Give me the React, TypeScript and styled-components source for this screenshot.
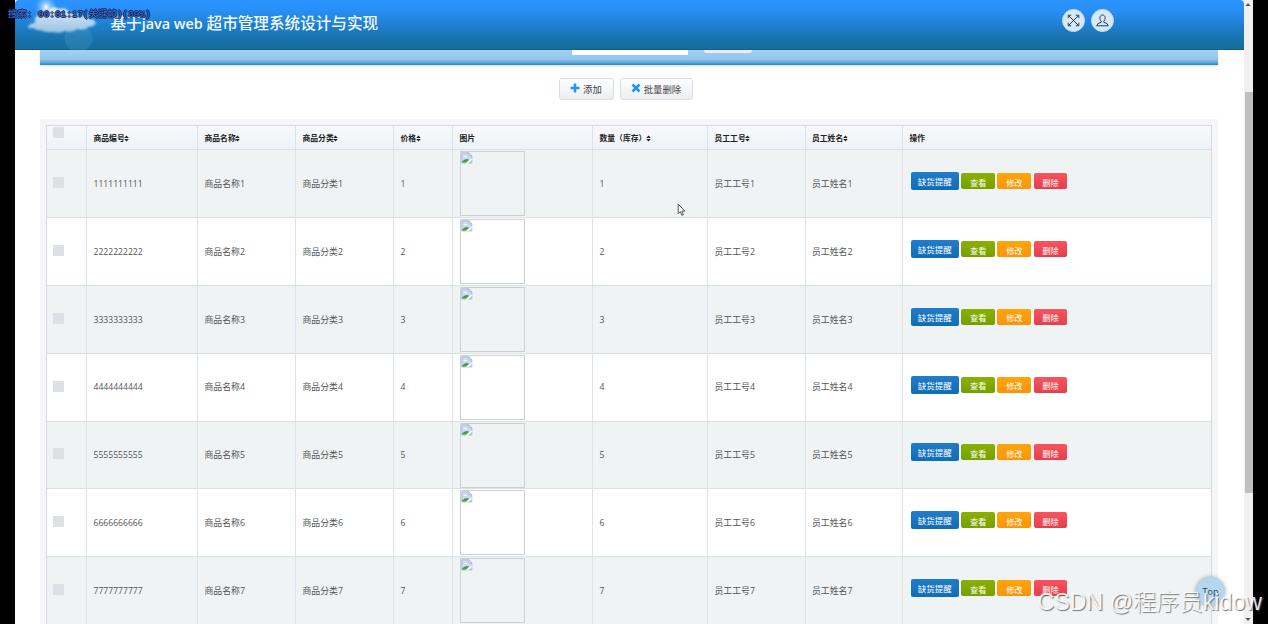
import React from "react";
import styled, { createGlobalStyle } from "styled-components";

const GlobalStyle = createGlobalStyle`
  * { box-sizing: border-box; }
  body { margin: 0; background: #000; overflow: hidden; font-family: "Open Sans", "Noto Sans CJK SC", sans-serif; }
`;

const Screen = styled.div`
  position: relative;
  display: flex;
  width: 1268px;
  height: 624px;
  padding: 0 15px 0 14.5px;
  overflow: hidden;
  background: #000;
`;

const Page = styled.div`
  flex: 1;
  min-width: 0;
  background: #fff;
`;

const Header = styled.header`
  display: flex;
  align-items: flex-start;
  height: 50px;
  border-radius: 4px 4px 0 0;
  border-bottom: 1px solid #11608f;
  background: linear-gradient(#2a94ff 0%, #2990f8 18%, #1f80d2 50%, #1873ad 78%, #156c9c 100%);
`;

const Logo = styled.svg`
  width: 96px;
  height: 50px;
  flex: none;
`;

const Title = styled.h1`
  margin: 12px auto 0 0;
  font-size: 15.6px;
  line-height: 22px;
  font-weight: 500;
  color: #f4faff;
  white-space: pre;
  b { font-size: 14.4px; font-weight: 600; }
`;

const HeaderActions = styled.div`
  display: flex;
  gap: 6px;
  padding: 8.5px 129.5px 0 0;
`;

const RoundButton = styled.button`
  display: grid;
  place-items: center;
  width: 23px;
  height: 23px;
  padding: 0;
  border: 1px solid #bedcf6;
  border-radius: 50%;
  background: #d6e8f9;
  svg { display: block; }
`;

const SearchBand = styled.div`
  display: flex;
  justify-content: center;
  gap: 16px;
  height: 15.4px;
  margin: 0 26px 0 25.5px;
  padding-left: 67px;
  background: linear-gradient(#a5d0ef 0%, #93c6ec 60%, #66b0e2 80%, #3c98c9 92%, #2d88b2 100%);
  box-shadow: 0 1px 2px rgba(0, 0, 0, 0.15);
`;

const SearchInput = styled.div`
  width: 116px;
  height: 5px;
  background: #fff;
`;

const SearchButton = styled.div`
  width: 48px;
  height: 3px;
  border-radius: 0 0 3px 3px;
  background: #e9ecf6;
`;

const Toolbar = styled.div`
  display: flex;
  justify-content: center;
  gap: 6px;
  padding: 12.6px 7px 0 0;
  height: 53.8px;
`;

const ToolButton = styled.button<{ $width: number }>`
  display: flex;
  align-items: center;
  justify-content: center;
  gap: 3px;
  width: ${(p) => p.$width}px;
  height: 22px;
  padding: 1px 0 0;
  border: 1px solid #d9dcec;
  border-radius: 3px;
  background: linear-gradient(#fff, #ebedf0);
  color: #444;
  font: 9.4px "Noto Sans CJK SC", sans-serif;
  svg { margin-top: -2px; }
`;

const Panel = styled.main`
  margin: 0 26px 0 25.5px;
  padding: 6px 6px 0 6px;
  background: #f6f5f7;
`;

const Grid = styled.div`
  border: 1px solid #d3dae0;
  background: #fff;
`;

const Row = styled.div<{ $striped?: boolean }>`
  display: grid;
  grid-template-columns: 40px 111px 98px 98px 59px 140px 115px 97.5px 97.5px 1fr;
  height: 67.8px;
  border-bottom: 1px solid #d9e1e7;
  background: ${(p) => (p.$striped ? "#eff3f4" : "#fff")};
`;

const HeadRow = styled(Row)`
  height: 24.2px;
  background: linear-gradient(#f7f8fb, #eef3f8);
`;

const Cell = styled.div`
  display: flex;
  align-items: center;
  min-width: 0;
  padding: 0.5px 0 0 6.5px;
  border-right: 1px solid #dde3e8;
  color: #555;
  font-size: 8.9px;
  line-height: 12px;
  white-space: nowrap;
  &:last-child { border-right: 0; }
`;

const NumberCell = styled(Cell)`
  font-size: 8.6px;
`;

const HeadCell = styled(Cell)`
  color: #222;
  font-size: 7.8px;
  font-weight: 700;
  padding-top: 1px;
  svg { margin-left: -0.5px; }
`;

const CheckCell = styled(Cell)<{ $top?: boolean }>`
  align-items: ${(p) => (p.$top ? "flex-start" : "center")};
  padding: ${(p) => (p.$top ? "1px 0 0 6px" : "0 0 2px 6px")};
`;

const CheckBox = styled.span`
  width: 11px;
  height: 11px;
  background: #dde1e6;
`;

const ImageCell = styled(Cell)`
  align-items: flex-start;
  padding-top: 1px;
`;

const ImageFrame = styled.div`
  width: 65px;
  height: 65px;
  border: 1px solid #cdd0d2;
  svg { display: block; }
`;

const Actions = styled(Cell)`
  gap: 2.5px;
  padding: 0 0 5px 7.8px;
`;

const tones = {
  blue: "#217dcb, #106cb4",
  green: "#8bb000, #76a000",
  orange: "#ffa50a, #fb940a",
  red: "#f8545f, #e43f4c",
};

const ActionButton = styled.button<{ $tone: keyof typeof tones }>`
  width: ${(p) => (p.$tone === "blue" ? 48 : 33.7)}px;
  height: ${(p) => (p.$tone === "blue" ? 18 : 16)}px;
  padding: ${(p) => (p.$tone === "blue" ? 0 : 1)}px 0 0;
  border: 0;
  border-radius: 2px;
  background: linear-gradient(${(p) => tones[p.$tone]});
  color: #fff;
  font: 400 ${(p) => (p.$tone === "blue" ? 8.5 : 8.2)}px / 14px "Noto Sans CJK SC", sans-serif;
`;

const ScrollBar = styled.div`
  display: flex;
  flex-direction: column;
  align-items: center;
  justify-content: space-between;
  width: 9.5px;
  padding: 3px 0;
  background: #f0f0f1;
`;

const ScrollThumb = styled.div`
  width: 8.5px;
  height: 401px;
  margin: 85px 0 auto 1px;
  background: #bfbfbf;
`;

const TopButton = styled.div`
  position: absolute;
  left: 1196px;
  top: 577px;
  width: 29px;
  height: 29px;
  border-radius: 50%;
  background: #b3d7ef;
  box-shadow: 0 0 4px rgba(0, 0, 0, 0.35);
  color: #345;
  font-size: 9px;
  line-height: 30px;
  text-align: center;
`;

const Watermark = styled.div`
  position: absolute;
  left: 1037.5px;
  top: 586px;
  color: rgba(255, 255, 255, 0.88);
  font: 300 23.2px / 32px "Liberation Sans", "Noto Sans CJK SC", sans-serif;
  text-shadow: 1px 1px 1px rgba(80, 80, 80, 0.75);
  white-space: nowrap;
`;

const Overlay = styled.div`
  position: absolute;
  left: 8px;
  top: 8px;
  color: #4a6fd0;
  font: 9.4px / 13px "Liberation Mono", "Noto Sans CJK SC", monospace;
  text-shadow: 1px 0 #0b1c48, -1px 0 #0b1c48, 0 1px #0b1c48, 0 -1px #0b1c48;
  white-space: pre;
`;

const Pointer = styled.svg`
  position: absolute;
  left: 677px;
  top: 203px;
`;

const SortIcon = () => (
  <svg width="5" height="7" viewBox="0 0 5 7" fill="#222">
    <path d="M2.5 .4 4.8 3H.2zM2.5 6.6.2 4h4.6z" />
  </svg>
);

const BrokenImage = () => (
  <svg width="12" height="12" viewBox="0 0 12 12">
    <path d="M.8.800h7l3 3V11H.8z" fill="#c9dafa" stroke="#a9afb6" strokeWidth=".8" />
    <path d="M7.800.8v3h3z" fill="#fff" stroke="#a9afb6" strokeWidth=".8" />
    <path d="M2.500 5q1.500-2.500 3.500 0z" fill="#fff" />
    <path d="M1.200 10.600V9.500Q4 5.800 8 7.500L5.500 10.600z" fill="#45a035" />
    <path d="M5.300 11.600 11.400 6.800" stroke="#f8fafb" strokeWidth="1.300" />
  </svg>
);

const heads = [
  ["商品编号", true], ["商品名称", true], ["商品分类", true], ["价格", true], ["图片", false],
  ["数量（库存）", true], ["员工工号", true], ["员工姓名", true], ["操作", false],
] as const;

const CloudLogo = () => (
  <Logo viewBox="0 0 96 50">
    <defs>
      <filter id="soft" x="-20%" y="-30%" width="140%" height="160%"><feGaussianBlur stdDeviation=".9" /></filter>
      <linearGradient id="cloud" x1="0" y1="0" x2="0" y2="1">
        <stop offset="0" stopColor="#f4f9fd" />
        <stop offset="1" stopColor="#a5cbe5" />
      </linearGradient>
      <radialGradient id="sun">
        <stop offset="0" stopColor="#fff" />
        <stop offset=".3" stopColor="#cfe8ff" stopOpacity=".7" />
        <stop offset="1" stopColor="#8cc7ff" stopOpacity="0" />
      </radialGradient>
    </defs>
    <circle cx="31" cy="7" r="11" fill="url(#sun)" />
    <circle cx="63.500" cy="38" r="14" fill="#8cc6dc" opacity=".15" />
    <path filter="url(#soft)" fill="url(#cloud)" opacity=".9" d="M13 27q2-4 7-4-1-5 2-7 4-8 11-6 5-5 11-1 8-2 11 5 7-2 9 3 8-3 10 2 5 0 7 4-2 4-8 4-3 4-11 2-5 4-12 2-5 3-12 1-8 1-12-2-5 1-7-2-5 1-7-1z" />
  </Logo>
);

export default function App() {
  return (
    <Screen>
      <GlobalStyle />
      <Page>
        <Header>
          <CloudLogo />
          <Title>基于<b>java web </b>超市管理系统设计与实现</Title>
          <HeaderActions>
            <RoundButton aria-label="全屏">
              <svg width="13" height="13" viewBox="0 0 13 13" fill="none" stroke="#303d4a" strokeWidth="1">
                <path d="M1.500 1.500l10 10M11.500 1.500l-10 10M1.200 4.200V1.200h3M8.800 1.200h3v3M11.800 8.800v3h-3M4.200 11.800h-3v-3" />
              </svg>
            </RoundButton>
            <RoundButton aria-label="用户">
              <svg width="13" height="13" viewBox="0 0 13 13" fill="none" stroke="#303d4a" strokeWidth="1">
                <path d="M5.200 8.300V7.200C3.200 5.500 3.300 1 6.500 1s3.300 4.500 1.300 6.200v1.100q4.200.8 4.500 3.500H.7q.3-2.700 4.500-3.500z" />
              </svg>
            </RoundButton>
          </HeaderActions>
        </Header>
        <SearchBand><SearchInput /><SearchButton /></SearchBand>
        <Toolbar>
          <ToolButton $width={55}>
            <svg width="10" height="10" viewBox="0 0 10 10" stroke="#2595eb" strokeWidth="2.500"><path d="M5 .5v9M.5 5h9" /></svg>
            添加
          </ToolButton>
          <ToolButton $width={73}>
            <svg width="10" height="10" viewBox="0 0 10 10" stroke="#2595eb" strokeWidth="2.600"><path d="M1.500 1.500l7 7M8.500 1.500l-7 7" /></svg>
            批量删除
          </ToolButton>
        </Toolbar>
        <Panel>
          <Grid>
            <HeadRow>
              <CheckCell $top><CheckBox /></CheckCell>
              {heads.map(([label, sortable]) => (
                <HeadCell key={label}>{label}{sortable && <SortIcon />}</HeadCell>
              ))}
            </HeadRow>
            {[1, 2, 3, 4, 5, 6, 7].map((n) => (
              <Row key={n} $striped={n % 2 === 1}>
                <CheckCell><CheckBox /></CheckCell>
                <NumberCell>{String(n).repeat(10)}</NumberCell>
                <Cell>商品名称{n}</Cell>
                <Cell>商品分类{n}</Cell>
                <NumberCell>{n}</NumberCell>
                <ImageCell><ImageFrame><BrokenImage /></ImageFrame></ImageCell>
                <NumberCell>{n}</NumberCell>
                <Cell>员工工号{n}</Cell>
                <Cell>员工姓名{n}</Cell>
                <Actions>
                  <ActionButton $tone="blue">缺货提醒</ActionButton>
                  <ActionButton $tone="green">查看</ActionButton>
                  <ActionButton $tone="orange">修改</ActionButton>
                  <ActionButton $tone="red">删除</ActionButton>
                </Actions>
              </Row>
            ))}
          </Grid>
        </Panel>
      </Page>
      <ScrollBar>
        <svg width="6" height="4" viewBox="0 0 6 4" fill="#555"><path d="M3 0l2.500 3h-5z" /></svg>
        <ScrollThumb />
        <svg width="6" height="4" viewBox="0 0 6 4" fill="#555"><path d="M3 4L.5 1h5z" /></svg>
      </ScrollBar>
      <Pointer width="10" height="14" viewBox="0 0 10 14" fill="#fff" stroke="#444" strokeWidth=".9">
        <path d="M1.200 1v9.600l2.200-2 1.500 3.700 1.500-.7-1.500-3.500h3z" />
      </Pointer>
      <TopButton>Top</TopButton>
      <Watermark>CSDN @程序员kidow</Watermark>
      <Overlay>搜索: 00:01:17(关键帧)(39%)</Overlay>
    </Screen>
  );
}
